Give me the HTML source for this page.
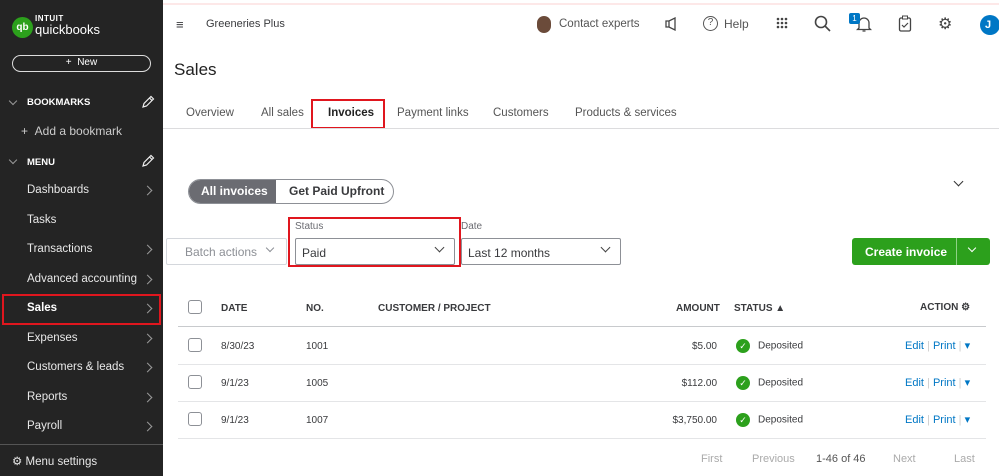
<!DOCTYPE html>
<html><head><meta charset="utf-8"><style>
*{box-sizing:border-box;margin:0;padding:0}
body{width:999px;height:476px;overflow:hidden;background:#fff;font-family:"Liberation Sans",sans-serif;position:relative;color:#393a3d}
.a{position:absolute;white-space:nowrap}
#sb{position:absolute;left:0;top:0;width:163px;height:476px;background:#242424;color:#fff}
.mi{position:absolute;left:27px;font-size:11.5px;color:#e8e8e8}
.ch{position:absolute;left:144px;width:7px;height:7px;border-right:1.2px solid #999;border-top:1.2px solid #999;transform:rotate(45deg)}
.hd{font-size:10px;font-weight:bold;color:#393a3d}
.row{position:absolute;left:178px;width:808px;height:37px;border-top:1px solid #e4e5e7}
.cb{position:absolute;width:14px;height:14px;border:1px solid #8d9096;border-radius:3px}
.t{font-size:10px;color:#393a3d}
.ok{display:inline-block;width:14px;height:14px;border-radius:50%;background:#2ca01c;color:#fff;font-size:9px;text-align:center;line-height:14px;vertical-align:middle;margin-right:8px}
.lk{color:#0077c5;font-size:11px}
.tab{font-size:11.5px;color:#555}
</style></head><body>
<div class="a" style="left:0;top:3px;width:999px;height:2px;background:#fde8e8"></div>
<div id="sb">
 <div class="a" style="left:12px;top:17px;width:21px;height:21px;border-radius:50%;background:#2ca01c;font-size:10px;font-weight:bold;text-align:center;line-height:21px">qb</div>
 <div class="a" style="left:35px;top:14px;font-size:8px;font-weight:bold;letter-spacing:.5px">INTUIT</div>
 <div class="a" style="left:35px;top:22px;font-size:13px">quickbooks</div>
 <div class="a" style="left:12px;top:55px;width:139px;height:17px;border:1.5px solid #ddd;border-radius:9px;font-size:10px;text-align:center;line-height:14px">+ &nbsp;New</div>
 <div class="a" style="left:10px;top:98px;width:6px;height:6px;border-right:1.2px solid #999;border-bottom:1.2px solid #999;transform:rotate(45deg)"></div>
 <div class="a" style="left:27px;top:97px;font-size:9.5px;font-weight:bold">BOOKMARKS</div>
 <svg class="a" style="left:141px;top:95px" width="14" height="14"><path d="M2 12l1-3.5 7-7 2.5 2.5-7 7z M8.5 3l2.5 2.5" fill="none" stroke="#eee" stroke-width="1.2"/></svg>
 <div class="a" style="left:21px;top:124px;font-size:12px;color:#ccc">+ &nbsp;Add a bookmark</div>
 <div class="a" style="left:10px;top:157px;width:6px;height:6px;border-right:1.2px solid #999;border-bottom:1.2px solid #999;transform:rotate(45deg)"></div>
 <div class="a" style="left:27px;top:157px;font-size:9.5px;font-weight:bold">MENU</div>
 <svg class="a" style="left:141px;top:154px" width="14" height="14"><path d="M2 12l1-3.5 7-7 2.5 2.5-7 7z M8.5 3l2.5 2.5" fill="none" stroke="#eee" stroke-width="1.2"/></svg>
 <div class="mi" style="top:184px">Dashboards</div><div class="ch" style="top:187px"></div>
 <div class="mi" style="top:214px">Tasks</div>
 <div class="mi" style="top:243px">Transactions</div><div class="ch" style="top:246px"></div>
 <div class="mi" style="top:273px">Advanced accounting</div><div class="ch" style="top:276px"></div>
 <div class="mi" style="top:302px;font-weight:bold;color:#fff">Sales</div><div class="ch" style="top:305px"></div>
 <div class="a" style="left:2px;top:294px;width:159px;height:31px;border:2px solid #e0161e"></div>
 <div class="mi" style="top:332px">Expenses</div><div class="ch" style="top:335px"></div>
 <div class="mi" style="top:361px">Customers &amp; leads</div><div class="ch" style="top:364px"></div>
 <div class="mi" style="top:391px">Reports</div><div class="ch" style="top:394px"></div>
 <div class="mi" style="top:420px">Payroll</div><div class="ch" style="top:423px"></div>
 <div class="a" style="left:0;top:444px;width:163px;height:1px;background:#555"></div>
 <div class="a" style="left:12px;top:454px;font-size:11.5px;color:#e8e8e8">&#9881; Menu settings</div>
</div>
<div class="a" style="left:176px;top:17px;font-size:13px">&#8801;</div>
<div class="a" style="left:206px;top:18px;font-size:11px">Greeneries Plus</div>
<div class="a" style="left:537px;top:16px;width:14px;height:17px;border-radius:7px;background:#6b4b3a"></div>
<div class="a" style="left:559px;top:18px;font-size:11.5px;color:#555">Contact experts</div>
<svg class="a" style="left:664px;top:17px" width="14" height="14"><path d="M2 4h3l6-3v12l-6-3H2z M5 4v6" fill="none" stroke="#444" stroke-width="1.3"/></svg>
<div class="a" style="left:703px;top:16px;width:15px;height:15px;border:1.5px solid #555;border-radius:50%;font-size:10px;text-align:center;line-height:12px;color:#555">?</div>
<div class="a" style="left:724px;top:17px;font-size:12px;color:#555">Help</div>
<svg class="a" style="left:776px;top:17px" width="12" height="12"><g fill="#444"><circle cx="2" cy="2" r="1.3"/><circle cx="6" cy="2" r="1.3"/><circle cx="10" cy="2" r="1.3"/><circle cx="2" cy="6" r="1.3"/><circle cx="6" cy="6" r="1.3"/><circle cx="10" cy="6" r="1.3"/><circle cx="2" cy="10" r="1.3"/><circle cx="6" cy="10" r="1.3"/><circle cx="10" cy="10" r="1.3"/></g></svg>
<svg class="a" style="left:814px;top:15px" width="18" height="18"><circle cx="7" cy="7" r="5.5" fill="none" stroke="#444" stroke-width="1.6"/><line x1="11" y1="11" x2="16" y2="16" stroke="#444" stroke-width="1.6"/></svg>
<svg class="a" style="left:856px;top:15px" width="16" height="18"><path d="M3 13V8a5 5 0 0 1 10 0v5l1.5 1.5h-13z M6.5 16h3" fill="none" stroke="#444" stroke-width="1.3"/></svg>
<div class="a" style="left:849px;top:13px;width:11px;height:11px;background:#0077c5;color:#fff;font-size:8px;text-align:center;line-height:11px;border-radius:2px">1</div>
<svg class="a" style="left:898px;top:15px" width="14" height="18"><rect x="1.5" y="3" width="11" height="13" rx="1.5" fill="none" stroke="#444" stroke-width="1.3"/><rect x="4.5" y="1" width="5" height="3" fill="#fff" stroke="#444"/><path d="M4 10l2 2 4-4" fill="none" stroke="#444" stroke-width="1.2"/></svg>
<div class="a" style="left:938px;top:14px;font-size:16px;color:#444">&#9881;</div>
<div class="a" style="left:980px;top:15px;width:20px;height:20px;border-radius:50%;background:#0077c5;color:#fff;font-size:11px;font-weight:bold;line-height:20px;padding-left:5px">J</div>
<div class="a" style="left:174px;top:60px;font-size:17px;color:#222">Sales</div>
<div class="a tab" style="left:186px;top:107px">Overview</div>
<div class="a tab" style="left:261px;top:107px">All sales</div>
<div class="a tab" style="left:328px;top:107px;font-weight:bold;color:#222">Invoices</div>
<div class="a" style="left:311px;top:99px;width:74px;height:30px;border:2.5px solid #e0161e"></div>
<div class="a tab" style="left:397px;top:107px">Payment links</div>
<div class="a tab" style="left:493px;top:107px">Customers</div>
<div class="a tab" style="left:575px;top:107px">Products &amp; services</div>
<div class="a" style="left:163px;top:128px;width:836px;height:1px;background:#dcdcde"></div>
<div class="a" style="left:188px;top:179px;width:206px;height:25px;border:1px solid #8d9096;border-radius:13px;overflow:hidden">
 <div class="a" style="left:0;top:0;width:87px;height:25px;background:#6b6c72;color:#fff;font-size:12px;font-weight:bold;line-height:23px;padding-left:12px">All invoices</div>
 <div class="a" style="left:100px;top:4px;font-size:12px;font-weight:bold;color:#393a3d">Get Paid Upfront</div>
</div>
<div class="a" style="left:955px;top:178px;width:7px;height:7px;border-right:1.5px solid #333;border-bottom:1.5px solid #333;transform:rotate(45deg)"></div>
<div class="a" style="left:166px;top:238px;width:121px;height:27px;border:1px solid #d4d7dc;border-radius:2px;font-size:12px;color:#8d9096;padding:6px 0 0 18px">Batch actions</div>
<div class="a" style="left:267px;top:245px;width:6px;height:6px;border-right:1.2px solid #8d9096;border-bottom:1.2px solid #8d9096;transform:rotate(45deg)"></div>
<div class="a" style="left:295px;top:221px;font-size:10px;color:#6b6c72">Status</div>
<div class="a" style="left:295px;top:238px;width:160px;height:27px;border:1px solid #8d9096;border-radius:2px;font-size:12px;padding:7px 0 0 6px">Paid</div>
<div class="a" style="left:436px;top:244px;width:7px;height:7px;border-right:1.5px solid #444;border-bottom:1.5px solid #444;transform:rotate(45deg)"></div>
<div class="a" style="left:288px;top:217px;width:173px;height:50px;border:2.5px solid #e0161e"></div>
<div class="a" style="left:461px;top:221px;font-size:10px;color:#6b6c72">Date</div>
<div class="a" style="left:461px;top:238px;width:160px;height:27px;border:1px solid #8d9096;border-radius:2px;font-size:12px;padding:7px 0 0 6px">Last 12 months</div>
<div class="a" style="left:602px;top:244px;width:7px;height:7px;border-right:1.5px solid #444;border-bottom:1.5px solid #444;transform:rotate(45deg)"></div>
<div class="a" style="left:852px;top:238px;width:138px;height:27px;background:#2ca01c;border-radius:3px"></div>
<div class="a" style="left:865px;top:245px;font-size:12px;font-weight:bold;color:#fff">Create invoice</div>
<div class="a" style="left:956px;top:238px;width:1px;height:27px;background:#8fd186"></div>
<div class="a" style="left:969px;top:245px;width:6px;height:6px;border-right:1.5px solid #fff;border-bottom:1.5px solid #fff;transform:rotate(45deg)"></div>
<div class="cb" style="left:188px;top:300px"></div>
<div class="a hd" style="left:221px;top:303px">DATE</div>
<div class="a hd" style="left:306px;top:303px">NO.</div>
<div class="a hd" style="left:378px;top:303px">CUSTOMER / PROJECT</div>
<div class="a hd" style="left:676px;top:303px">AMOUNT</div>
<div class="a hd" style="left:734px;top:303px">STATUS &#9650;</div>
<div class="a hd" style="left:920px;top:302px">ACTION &#9881;</div>
<div class="a" style="left:178px;top:326px;width:808px;height:1px;background:#c8cacd"></div>
<div class="cb" style="left:188px;top:338px"></div>
<div class="a t" style="left:221px;top:341px">8/30/23</div><div class="a t" style="left:306px;top:341px">1001</div>
<div class="a t" style="left:673px;top:341px;width:44px;text-align:right">$5.00</div>
<div class="a t" style="left:736px;top:339px"><span class="ok">&#10003;</span>Deposited</div>
<div class="a lk" style="left:905px;top:339px">Edit<span style="color:#ccc"> | </span>Print<span style="color:#ccc"> | </span>&#9662;</div>
<div class="row" style="top:364px"></div>
<div class="cb" style="left:188px;top:375px"></div>
<div class="a t" style="left:221px;top:378px">9/1/23</div><div class="a t" style="left:306px;top:378px">1005</div>
<div class="a t" style="left:663px;top:378px;width:54px;text-align:right">$112.00</div>
<div class="a t" style="left:736px;top:376px"><span class="ok">&#10003;</span>Deposited</div>
<div class="a lk" style="left:905px;top:376px">Edit<span style="color:#ccc"> | </span>Print<span style="color:#ccc"> | </span>&#9662;</div>
<div class="row" style="top:401px"></div>
<div class="cb" style="left:188px;top:412px"></div>
<div class="a t" style="left:221px;top:415px">9/1/23</div><div class="a t" style="left:306px;top:415px">1007</div>
<div class="a t" style="left:657px;top:415px;width:60px;text-align:right">$3,750.00</div>
<div class="a t" style="left:736px;top:413px"><span class="ok">&#10003;</span>Deposited</div>
<div class="a lk" style="left:905px;top:413px">Edit<span style="color:#ccc"> | </span>Print<span style="color:#ccc"> | </span>&#9662;</div>
<div class="a" style="left:178px;top:438px;width:808px;height:1px;background:#e4e5e7"></div>
<div class="a" style="left:701px;top:453px;font-size:11px;color:#aaa">First</div>
<div class="a" style="left:752px;top:453px;font-size:11px;color:#aaa">Previous</div>
<div class="a" style="left:816px;top:453px;font-size:11px;color:#555">1-46 of 46</div>
<div class="a" style="left:893px;top:453px;font-size:11px;color:#aaa">Next</div>
<div class="a" style="left:954px;top:453px;font-size:11px;color:#aaa">Last</div>
</body></html>
